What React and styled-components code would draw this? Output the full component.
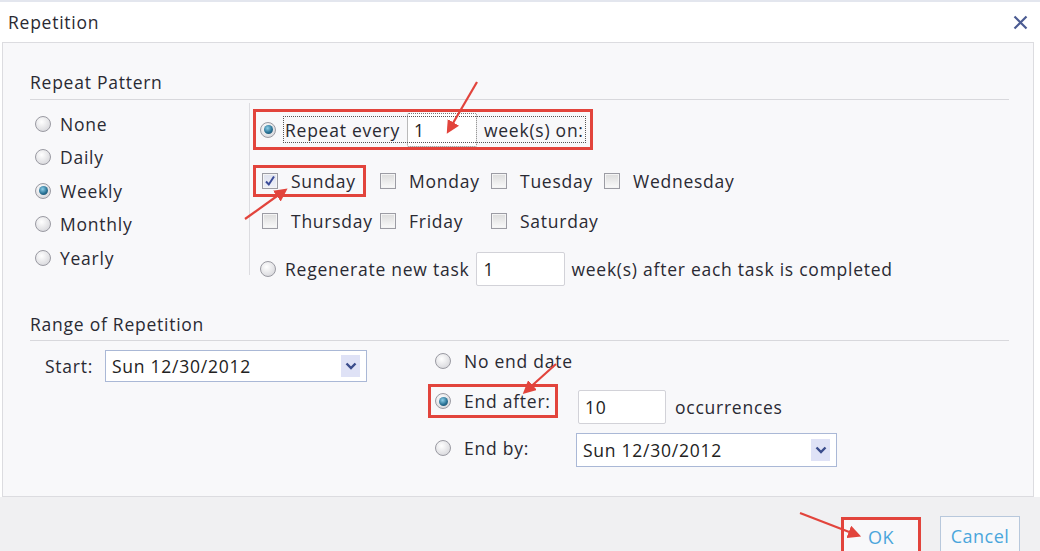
import React from "react";
import styled, { createGlobalStyle } from "styled-components";

const RED = "#e2443c";

const GlobalStyle = createGlobalStyle`
  html, body {
    margin: 0;
    padding: 0;
    background: #fff;
    overflow: hidden;
  }
  body {
    font-family: "Open Sans", "Noto Sans", sans-serif;
    color: #2a2a33;
  }
`;

const Dialog = styled.div`
  position: relative;
  width: 1040px;
  height: 551px;
  overflow: hidden;
  display: flex;
  flex-direction: column;
  background: #fff;
  font-size: 17.5px;
  letter-spacing: 0.75px;
  white-space: nowrap;
`;

const TitleBar = styled.div`
  flex: none;
  height: 42px;
  box-sizing: border-box;
  border-top: 2px solid #e3e6ee;
  display: flex;
  align-items: center;
  justify-content: space-between;
  padding: 0 11px 0 8px;
`;

const Title = styled.div`
  font-size: 17.5px;
  color: #2a2a32;
`;

const Close = styled.button`
  border: 0;
  background: none;
  padding: 0;
  width: 18px;
  height: 18px;
  display: flex;
  align-items: center;
  justify-content: center;
`;

const Body = styled.div`
  flex: none;
  height: 455px;
  box-sizing: border-box;
  margin: 0 6px 0 2px;
  border: 1px solid #dcdce0;
  background: #f8f8fa;
  padding: 0 24px 0 27px;
`;

const SectionTitle = styled.div`
  padding-top: ${(p) => p.$top}px;
  padding-bottom: ${(p) => p.$bottom}px;
  line-height: 24px;
  border-bottom: 1px solid #d8d8dc;
`;

const PatternGrid = styled.div`
  display: grid;
  grid-template-columns: 220px 1fr;
`;

const FrequencyList = styled.div`
  box-sizing: border-box;
  align-self: start;
  height: 172px;
  margin-top: 3px;
  padding: 4px 0 0 5px;
  border-right: 1px solid #dcdce0;
`;

const FrequencyRow = styled.div`
  height: 33.5px;
  display: flex;
  align-items: center;
  gap: 9px;
`;

const PatternDetails = styled.div`
  padding-left: 3px;
  display: flex;
  flex-direction: column;
  align-items: flex-start;
`;

const Highlight = styled.div`
  box-sizing: border-box;
  border: 3px solid ${(p) => (p.$on ? RED : "transparent")};
  display: flex;
  align-items: center;
`;

const RepeatBox = styled(Highlight)`
  margin-top: 9px;
  height: 41px;
  padding: 0 5px 0 4px;
  gap: 8px;
`;

const FocusLabel = styled.div`
  display: flex;
  align-items: center;
  height: 25px;
  outline: 1px dotted #555;
  padding: 0 1px 0 1px;
  gap: 7px;
`;

const DaysGrid = styled.div`
  margin-top: 15px;
  display: grid;
  grid-template-columns: 118px 111px 113px auto;
  grid-auto-rows: 32px;
  row-gap: 8px;
`;

const DayItem = styled(Highlight)`
  justify-self: start;
  height: 32px;
  padding: 0 7px 0 6px;
  gap: 13px;
`;

const Checkbox = styled.span`
  width: 16px;
  height: 16px;
  box-sizing: border-box;
  border: 1px solid #9c9ca4;
  background: ${(p) =>
    p.$checked
      ? "linear-gradient(#dfe2ee, #eef0f8)"
      : "linear-gradient(#dcdcdc, #fafafa)"};
  box-shadow: inset 0 0 0 1px #f4f4f4;
  display: flex;
  align-items: center;
  justify-content: center;
  flex: none;
`;

const Radio = styled.span`
  width: 16px;
  height: 16px;
  box-sizing: border-box;
  border-radius: 50%;
  border: 1px solid #9a9aa2;
  background: radial-gradient(circle at 40% 35%, #ffffff, #cfcfd4);
  display: flex;
  align-items: center;
  justify-content: center;
  flex: none;

  &::after {
    content: "";
    display: ${(p) => (p.$checked ? "block" : "none")};
    width: 9px;
    height: 9px;
    border-radius: 50%;
    background: radial-gradient(circle at 40% 35%, #8fd0ea, #2a7396 55%, #163e58);
  }
`;

const TextBox = styled.input`
  box-sizing: border-box;
  width: ${(p) => p.$w}px;
  height: 34px;
  border: 1px ${(p) => (p.$dotted ? "dotted #777" : "solid #d2d2d8")};
  border-radius: 2px;
  background: #fff;
  font: inherit;
  letter-spacing: inherit;
  color: #222;
  padding: 0 6px;
  margin: ${(p) => p.$margin || 0};
  outline: none;
`;

const RegenerateRow = styled.div`
  margin-top: 15px;
  height: 34px;
  display: flex;
  align-items: center;
  padding-left: 7px;
  gap: 9px;
`;

const RangeGrid = styled.div`
  display: grid;
  grid-template-columns: 398px 1fr;
`;

const StartRow = styled.div`
  padding: 9px 0 0 15px;
  display: flex;
  align-items: flex-start;
`;

const FieldLabel = styled.div`
  width: ${(p) => p.$w}px;
  line-height: 32px;
`;

const Select = styled.div`
  box-sizing: border-box;
  width: ${(p) => p.$w}px;
  height: ${(p) => p.$h}px;
  margin-top: ${(p) => p.$top || 0}px;
  margin-left: ${(p) => p.$left || 0}px;
  border: 1px solid #aab8d6;
  background: #fff;
  display: flex;
  align-items: center;
  justify-content: space-between;
  padding: 0 6px 0 6px;
  color: #222;
`;

const SelectArrow = styled.span`
  width: 19px;
  height: 22px;
  background: #dfe2f6;
  display: flex;
  align-items: center;
  justify-content: center;
`;

const EndOptions = styled.div`
  display: flex;
  flex-direction: column;
  padding-top: 2px;
`;

const EndRow = styled.div`
  display: flex;
  align-items: flex-start;
  height: ${(p) => p.$h}px;
  margin-top: ${(p) => p.$top || 0}px;
`;

const EndLabel = styled(Highlight)`
  width: 130px;
  height: ${(p) => p.$h || 34}px;
  padding-left: 4px;
  gap: 13px;
`;

const Occurrences = styled.div`
  display: flex;
  align-items: center;
  gap: 9px;
  margin: 6px 0 0 20px;
`;

const Footer = styled.div`
  flex: 1;
  background: #f0f0f2;
  display: flex;
  justify-content: flex-end;
  align-items: flex-start;
  gap: 19px;
  padding: 19px 20px 0 0;
`;

const Button = styled.button`
  box-sizing: border-box;
  flex: none;
  width: 80px;
  height: 40px;
  font: inherit;
  font-size: 18px;
  letter-spacing: 0.5px;
  color: #4aa6dc;
  background: #f8f8fa;
  border: ${(p) => (p.$highlight ? `3px solid ${RED}` : "1px solid #b8c8dc")};
  margin-top: ${(p) => (p.$highlight ? 1 : 0)}px;
  padding: 0;
`;

const Annotations = styled.svg`
  position: absolute;
  left: 0;
  top: 0;
  pointer-events: none;
`;

const Chevron = () => (
  <svg width="12" height="8" viewBox="0 0 12 8">
    <polyline points="1.5,1.5 6,6 10.5,1.5" fill="none" stroke="#3b4d8c" strokeWidth="2.4" />
  </svg>
);

const Check = () => (
  <svg width="12" height="12" viewBox="0 0 12 12">
    <path d="M2 6.5 L4.8 9.5 L10 1.5" fill="none" stroke="#3a4b98" strokeWidth="2" />
  </svg>
);

const frequencies = ["None", "Daily", "Weekly", "Monthly", "Yearly"];

const days = [
  { name: "Sunday", checked: true },
  { name: "Monday" },
  { name: "Tuesday" },
  { name: "Wednesday" },
  { name: "Thursday" },
  { name: "Friday" },
  { name: "Saturday" },
];

const arrows = [
  [477, 82, 449, 130],
  [245, 219, 284, 191],
  [556, 364, 526, 391],
  [800, 513, 857, 535],
];

export default function App() {
  return (
    <>
      <GlobalStyle />
      <Dialog>
        <TitleBar>
          <Title>Repetition</Title>
          <Close>
            <svg width="15" height="15" viewBox="0 0 15 15">
              <path d="M1.5 1.5 L13.5 13.5 M13.5 1.5 L1.5 13.5" stroke="#4b5b92" strokeWidth="2.2" />
            </svg>
          </Close>
        </TitleBar>

        <Body>
          <SectionTitle $top={27} $bottom={5}>Repeat Pattern</SectionTitle>
          <PatternGrid>
            <FrequencyList>
              {frequencies.map((f) => (
                <FrequencyRow key={f}>
                  <Radio $checked={f === "Weekly"} />
                  {f}
                </FrequencyRow>
              ))}
            </FrequencyList>

            <PatternDetails>
              <RepeatBox $on>
                <Radio $checked />
                <FocusLabel>
                  Repeat every
                  <TextBox $w={70} $dotted defaultValue="1" />
                  week(s) on:
                </FocusLabel>
              </RepeatBox>

              <DaysGrid>
                {days.map((d) => (
                  <DayItem key={d.name} $on={d.checked}>
                    <Checkbox $checked={d.checked}>{d.checked && <Check />}</Checkbox>
                    {d.name}
                  </DayItem>
                ))}
              </DaysGrid>

              <RegenerateRow>
                <Radio />
                Regenerate new task
                <TextBox $w={89} defaultValue="1" $margin="0 -3px 0 -2px" />
                week(s) after each task is completed
              </RegenerateRow>
            </PatternDetails>
          </PatternGrid>

          <SectionTitle $top={26} $bottom={4}>Range of Repetition</SectionTitle>
          <RangeGrid>
            <StartRow>
              <FieldLabel $w={60}>Start:</FieldLabel>
              <Select $w={262} $h={32}>
                Sun 12/30/2012
                <SelectArrow>
                  <Chevron />
                </SelectArrow>
              </Select>
            </StartRow>

            <EndOptions>
              <EndRow $h={36}>
                <EndLabel $h={36}>
                  <Radio />
                  No end date
                </EndLabel>
              </EndRow>
              <EndRow $h={40} $top={5}>
                <EndLabel $on>
                  <Radio $checked />
                  End after:
                </EndLabel>
                <Occurrences>
                  <TextBox $w={88} defaultValue="10" />
                  occurrences
                </Occurrences>
              </EndRow>
              <EndRow $h={38} $top={7}>
                <EndLabel>
                  <Radio />
                  End by:
                </EndLabel>
                <Select $w={261} $h={34} $top={2} $left={18}>
                  Sun 12/30/2012
                  <SelectArrow>
                    <Chevron />
                  </SelectArrow>
                </Select>
              </EndRow>
            </EndOptions>
          </RangeGrid>
        </Body>

        <Footer>
          <Button $highlight>OK</Button>
          <Button>Cancel</Button>
        </Footer>

        <Annotations width="1040" height="551" viewBox="0 0 1040 551">
          <defs>
            <marker id="head" markerWidth="6" markerHeight="6" refX="4" refY="3" orient="auto" markerUnits="strokeWidth">
              <path d="M0,0 L6,3 L0,6 Z" fill={RED} />
            </marker>
          </defs>
          {arrows.map(([x1, y1, x2, y2], i) => (
            <line
              key={i}
              x1={x1}
              y1={y1}
              x2={x2}
              y2={y2}
              stroke={RED}
              strokeWidth="2.2"
              markerEnd="url(#head)"
            />
          ))}
        </Annotations>
      </Dialog>
    </>
  );
}
